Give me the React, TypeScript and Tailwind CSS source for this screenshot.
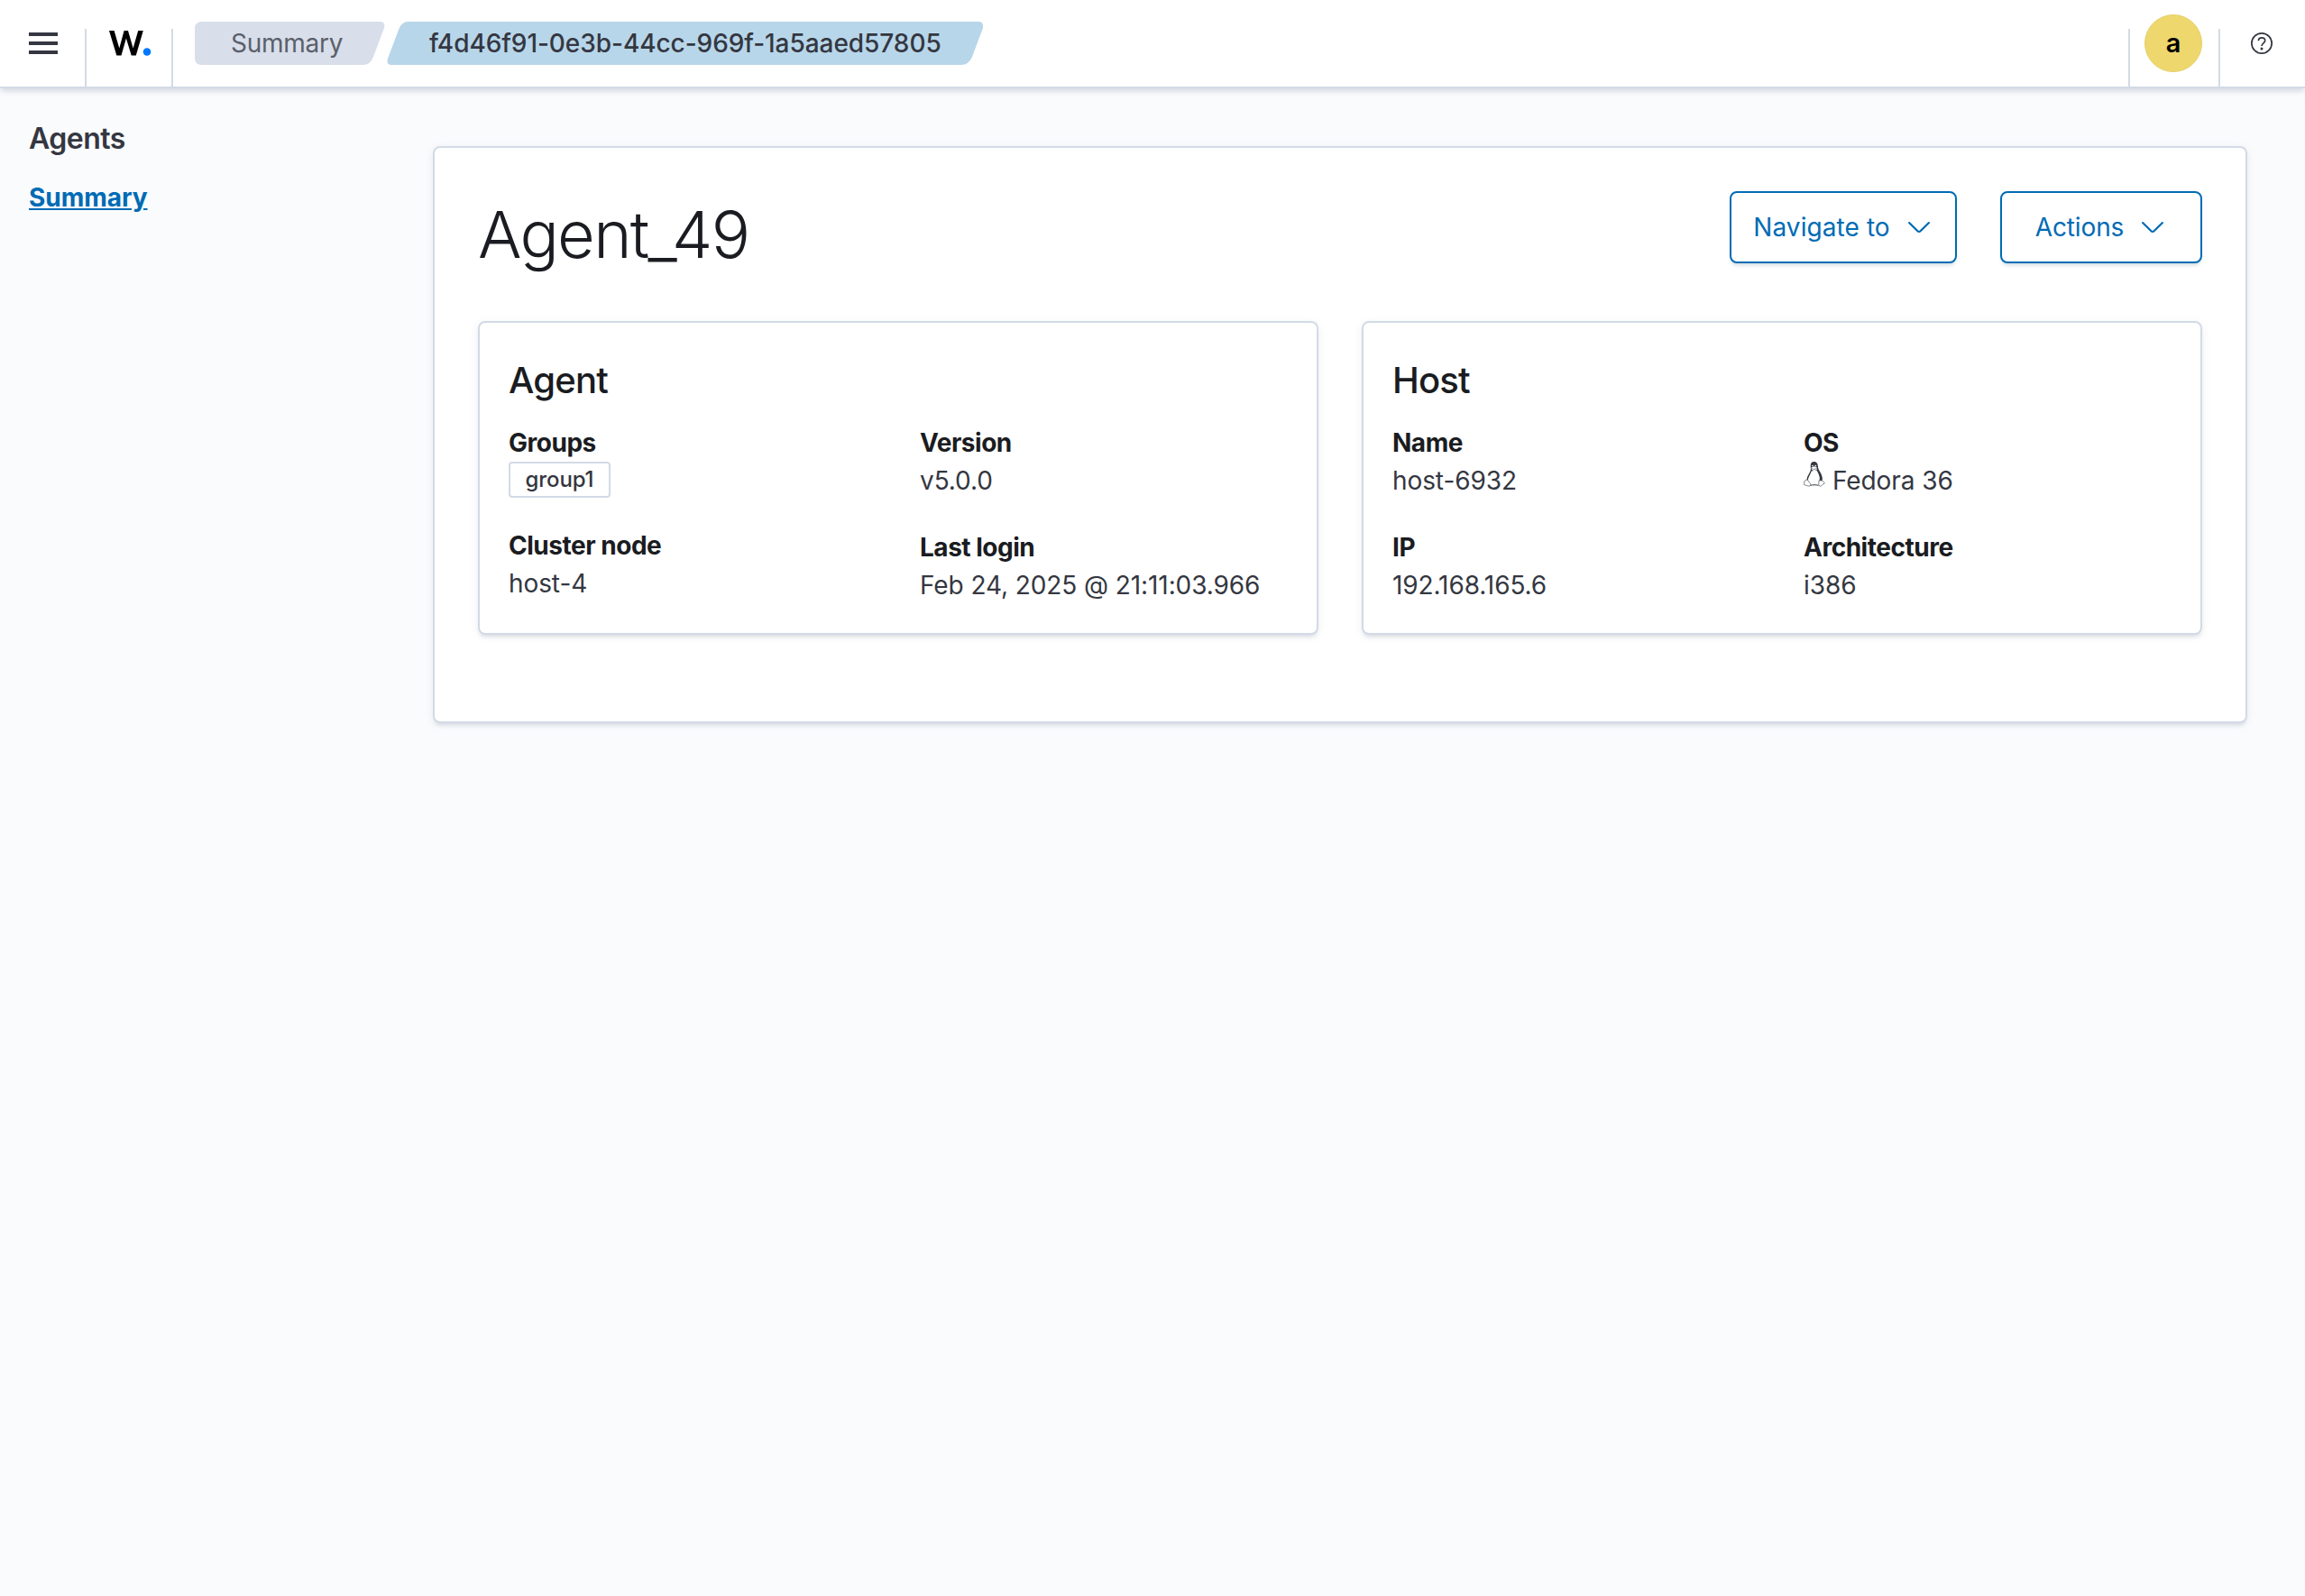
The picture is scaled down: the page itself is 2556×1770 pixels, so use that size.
import type { ReactNode } from "react";

const PANEL =
  "rounded-[8px] border-2 border-[#d3dae6] bg-white shadow-[0_4px_4px_-2px_rgba(152,162,179,0.3),0_2px_10px_0_rgba(152,162,179,0.15)]";

function Chevron() {
  return (
    <svg width="32" height="32" viewBox="0 0 16 16" fill="currentColor">
      <path
        fillRule="nonzero"
        d="M13.069 5.157L8.384 9.768a.546.546 0 01-.768 0L2.93 5.158a.552.552 0 00-.771 0 .53.53 0 000 .759l4.684 4.61c.641.631 1.672.63 2.312 0l4.684-4.61a.53.53 0 000-.76.552.552 0 00-.771 0z"
      />
    </svg>
  );
}

function Tux() {
  return (
    <svg width="24" height="28" viewBox="0 0 24 28" fill="none" stroke="#343741">
      <path
        d="M7.700 5C7.600 1.800 9 0 11.500 0c2.900 0 4.400 2 4.400 5.200 0 4.400 4.900 7.600 5 14.300l-1 2.500-3.400-.5L7.500 24 3.600 19.500c.4-4.500 4.300-7.500 4.300-11.500z"
        fill="#343741"
        stroke="none"
      />
      <path d="M8.700 10.500c-.6 3-3.600 6-3.900 10l3 5.500h8l1.600-4.500c1.500-4.300-1-8.500-2.900-12z" fill="#fff" stroke="none" />
      <path d="M8.600 6.400l2.700-1.100 3.500 1.300v2l-3 1.800-3-1.600z" fill="#fff" stroke="none" />
      <path d="M9 7.600l2.400 1 3.200-1.200" strokeWidth=".6" />
      <circle cx="9.900" cy="4.600" r=".8" fill="#fff" stroke="none" />
      <circle cx="13.300" cy="4.600" r=".9" fill="#fff" stroke="none" />
      <path d="M3.800 19.800l3.800 4.700c.7 1.800-.5 3-2.700 2.500L.6 25.500l.3-3.900z" fill="#fff" strokeWidth=".6" />
      <path d="M17 20.800l-.2 5c.7 1.900 2.200 1.700 3.300.4l3.200-2.300-2.400-2.800z" fill="#fff" strokeWidth=".6" />
      <path d="M7.500 26.300c3-.7 6-.7 9 0" strokeWidth="1" />
    </svg>
  );
}

function Help() {
  return (
    <svg width="24" height="24" viewBox="0 0 24 24" fill="none" stroke="#343741" strokeWidth="1.700">
      <circle cx="12" cy="12" r="11.150" />
      <path d="M8.400 9.300C8.400 7.200 9.900 5.900 12 5.900s3.700 1.300 3.700 3.200c0 2.700-3.700 2.900-3.700 6" />
      <circle cx="12" cy="18" r="1.500" fill="#343741" stroke="none" />
    </svg>
  );
}

function OutlineButton({ label, className }: { label: string; className: string }) {
  return (
    <button
      className={`flex h-20 items-center justify-center gap-4 rounded-[8px] border-2 border-[#006bb4] bg-white text-[28px] text-[#006bb4] shadow-[0_4px_4px_-2px_rgba(54,97,126,0.25)] ${className}`}
    >
      <span>{label}</span>
      <Chevron />
    </button>
  );
}

function Field({ label, children }: { label: string; children: ReactNode }) {
  return (
    <div>
      <dt className="h-[42px] text-[28px] leading-[42px] font-bold tracking-[-0.48px] text-[#1a1c21]">{label}</dt>
      <dd className="text-[28px] leading-[42px] tracking-[-0.09px]">{children}</dd>
    </div>
  );
}

function Card({ title, left, right }: { title: string; left: ReactNode; right: ReactNode }) {
  return (
    <section className={`h-[348px] flex-1 px-8 pt-8 ${PANEL}`}>
      <h2 className="h-16 text-[40px] leading-[64px] font-medium tracking-[-0.8px] text-[#1a1c21]">{title}</h2>
      <dl className="mt-4 grid grid-cols-2 gap-x-12">
        <div className="flex flex-col gap-8">{left}</div>
        <div className="flex flex-col gap-8">{right}</div>
      </dl>
    </section>
  );
}

export default function App() {
  return (
    <div className="min-h-[1770px] w-full bg-[#fafbfd] font-[Inter,sans-serif] tracking-[-0.14px] text-[#343741]">
      <header className="relative flex h-[98px] items-end border-b-2 border-[#d3dae6] bg-white shadow-[0_4px_6px_-1px_rgba(152,162,179,0.4)]">
        <div className="flex h-24 w-24 shrink-0 flex-col justify-center gap-[6px] pl-8">
          <i className="h-1 w-8 bg-[#343741]" />
          <i className="h-1 w-8 bg-[#343741]" />
          <i className="h-1 w-8 bg-[#343741]" />
        </div>
        <div className="-ml-0.5 flex h-16 w-[98px] shrink-0 border-x-2 border-[#d3dae6] pl-[25px]">
          <svg className="mt-px" width="48" height="30" viewBox="0 0 48 30">
            <path d="M0 1h5.600l5.700 19.500L16.600 1h4.400l5.600 19.500L32.200 1h5.600l-8 27.500h-5.100L18.900 9.500 13.500 28.500H8.300z" />
            <circle cx="42" cy="24.500" r="4.300" fill="#0078ff" />
          </svg>
        </div>
        <nav className="flex h-24 items-center pl-6 text-[28px]">
          <div className="relative flex h-12 w-[211px] items-center pl-10 tracking-[-0.25px] text-[#5a606b]">
            <svg className="absolute inset-0" width="211" height="48" viewBox="0 0 211 48">
              <path d="M8 0H205Q212 0 210 7L198 39Q195 48 186 48H8Q0 48 0 40V8Q0 0 8 0Z" fill="#d8deea" />
            </svg>
            <span className="relative">Summary</span>
          </div>
          <div className="relative ml-0.5 flex h-12 w-[662px] items-center pl-[47px] font-medium tracking-[-0.06px]">
            <svg className="absolute inset-0" width="662" height="48" viewBox="0 0 662 48">
              <path d="M24 0H656Q662 0 661 7L649 39Q645 48 637 48H5Q-1 48 1 41L13 9Q16 0 24 0Z" fill="#b8d6ea" />
            </svg>
            <span className="relative">f4d46f91-0e3b-44cc-969f-1a5aaed57805</span>
          </div>
        </nav>
        <div className="ml-auto flex h-24 items-end">
          <div className="flex h-16 w-[100px] items-end border-l-2 border-[#d3dae6]">
            <div className="mb-4 ml-4 flex size-16 items-center justify-center rounded-full border border-[#e6cf67] bg-[#eed76d] text-[29px] font-semibold text-black">
              a
            </div>
          </div>
          <div className="flex h-16 w-24 border-l-2 border-[#d3dae6] pt-1 pl-[34px]">
            <Help />
          </div>
        </div>
      </header>
      <div className="flex">
        <aside className="w-[480px] shrink-0 px-8 pt-8">
          <h1 className="h-12 text-[32px] leading-[48px] font-semibold tracking-[-0.5px]">Agents</h1>
          <a className="mt-5 block text-[28px] leading-[42px] font-bold tracking-[-0.05px] text-[#006bb4] underline">Summary</a>
        </aside>
        <main className={`mt-16 h-[640px] w-[2012px] px-12 pt-12 ${PANEL}`}>
          <div className="flex h-[144px] justify-between">
            <h1 className="text-[72px] leading-[96px] font-light tracking-[-1.7px] text-[#1a1c21]">Agent_49</h1>
            <div className="flex gap-12">
              <OutlineButton label="Navigate to" className="w-[252px] tracking-[0.08px]" />
              <OutlineButton label="Actions" className="w-[224px]" />
            </div>
          </div>
          <div className="flex gap-12">
            <Card
              title="Agent"
              left={
                <>
                  <Field label="Groups">
                    <div className="flex h-10 w-[113px] items-center justify-center rounded-[4px] border-2 border-[#d3dae6] text-[24px] font-medium tracking-[-0.12px]">
                      group1
                    </div>
                  </Field>
                  <Field label="Cluster node">host-4</Field>
                </>
              }
              right={
                <>
                  <Field label="Version">v5.0.0</Field>
                  <Field label="Last login">Feb 24, 2025 @ 21:11:03.966</Field>
                </>
              }
            />
            <Card
              title="Host"
              left={
                <>
                  <Field label="Name">host-6932</Field>
                  <Field label="IP">192.168.165.6</Field>
                </>
              }
              right={
                <>
                  <Field label="OS">
                    <span className="flex gap-2">
                      <Tux />
                      Fedora 36
                    </span>
                  </Field>
                  <Field label="Architecture">i386</Field>
                </>
              }
            />
          </div>
        </main>
      </div>
    </div>
  );
}
